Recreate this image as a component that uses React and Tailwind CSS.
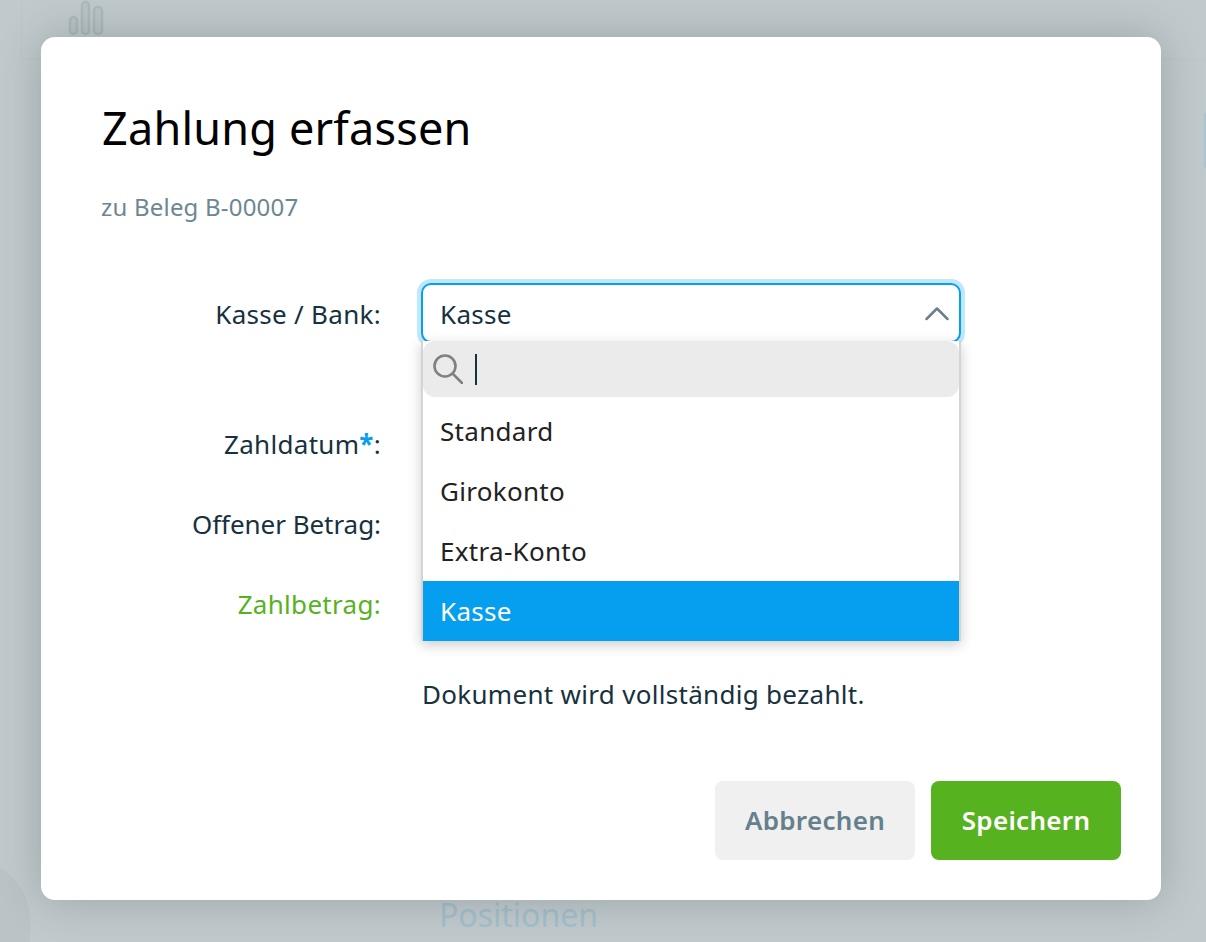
import { ChevronUp } from 'lucide-react';

const font = { fontFamily: '"Noto Sans", sans-serif' };

const options = ['Standard', 'Girokonto', 'Extra-Konto', 'Kasse'];

const FormRow = ({ label, height, className = '', children }) => (
  <div className={`flex items-center ${className}`} style={{ height }}>
    <div className="w-[279px] shrink-0 text-right">{label}</div>
    <div className="relative ml-[40px] w-[540px]">{children}</div>
  </div>
);

const KasseSelect = () => (
  <div className="relative h-[58px]">
    <div className="flex h-[60px] items-center justify-between rounded-[10px] border-2 border-[#069fef] bg-white pl-[17px] shadow-[0_0_0_4px_#c0e8fd]">
      <span className="pt-[2px]">Kasse</span>
      <svg className="mr-[10px] shrink-0" width="24" height="15" viewBox="0 0 24 15" fill="none" stroke="#6c8089" strokeWidth="2.5" strokeLinecap="round" strokeLinejoin="round">
        <path d="M1.5 13L12 2.5 22.5 13" />
      </svg>
    </div>
    <div className="absolute left-0 top-[58px] z-10 w-[540px] border-x-2 border-[#d4d4d4] bg-white shadow-[0_4px_12px_rgba(0,0,0,0.2)]">
      <div className="flex h-[56px] items-center rounded-[12px] bg-[#ebebeb] pl-[10px]">
        <svg width="30" height="30" viewBox="0 0 30 30" fill="none" stroke="#808080" strokeWidth="2.6" strokeLinecap="round">
          <circle cx="12" cy="12" r="10.5" />
          <path d="M20 20l9 9" />
        </svg>
        <span className="ml-[12px] h-[31px] w-[2px] bg-[#17313f]" />
      </div>
      <div className="pt-[4px]">
        {options.map((option) => (
          <div
            key={option}
            className={`flex h-[60px] items-center pl-[17px] ${option === 'Kasse' ? 'bg-[#069fef] text-white' : 'text-[#222222]'}`}
          >
            {option}
          </div>
        ))}
      </div>
    </div>
  </div>
);

export default function App() {
  return (
    <div style={font} className="relative h-[942px] w-[1206px] overflow-hidden bg-[#c0cacc] pl-[41px] pt-[37px] text-[26px] tracking-[0.3px] text-[#17313f]">
      {/* page behind the overlay */}
      <div className="absolute left-[21px] top-0 h-[60px] w-[1185px] border-b border-l border-[#bcc6c8]" />
      <svg className="absolute left-[68px] top-0" width="36" height="36" viewBox="0 0 36 36" fill="#b9c4c6" stroke="#adb9ba" strokeWidth="2.5">
        <rect x="2" y="17" width="7" height="17" rx="3.5" />
        <rect x="14" y="2" width="7" height="32" rx="3.5" />
        <rect x="26" y="7" width="8" height="27" rx="3.5" />
      </svg>
      <div className="absolute left-[-90px] top-[860px] h-[200px] w-[120px] rounded-full bg-[#bac4c6]" />
      <div className="absolute right-[-6px] top-[112px] h-[57px] w-[8px] rounded-[4px] bg-[#a9c4d0]" />
      <div className="absolute left-[439px] top-[893px] text-[32px] leading-[44px] tracking-normal text-[#a3c0cd]">Positionen</div>

      <div className="relative h-[863px] w-[1120px] rounded-[14px] bg-white pl-[61px] pr-[40px] shadow-[0_0_45px_rgba(0,0,0,0.2)]">
        <h1 className="pt-[56px] text-[45px] font-normal leading-[70px] tracking-[0.2px] text-black">Zahlung erfassen</h1>
        <p className="-ml-px mt-[29px] text-[24px] leading-[30px] tracking-[0.2px] text-[#6d8792]">zu Beleg B-00007</p>

        <div className="mt-[61px]">
          <FormRow label={<span className="relative top-[2px]">Kasse / Bank:</span>} height={58}>
            <KasseSelect />
          </FormRow>
          <FormRow
            height={60}
            className="mt-[73px]"
            label={<>Zahldatum<span className="font-bold text-[#069fef]">*</span>:</>}
          />
          <FormRow height={60} className="mt-[20px]" label={<span className="tracking-[-0.05px]">Offener Betrag:</span>} />
          <FormRow height={60} className="mt-[20px]" label={<span className="text-[#57b21f]">Zahlbetrag:</span>} />
          <FormRow height={40} className="mt-[40px]" label="">
            <span className="pl-[1px]">Dokument wird vollständig bezahlt.</span>
          </FormRow>
        </div>

        <div className="mt-[67px] flex justify-end gap-[16px]">
          <button type="button" className="h-[79px] w-[200px] rounded-[8px] bg-[#f0f0f0] font-semibold text-[#65808d]">Abbrechen</button>
          <button type="button" className="h-[79px] w-[190px] rounded-[8px] bg-[#57b21f] font-semibold text-white">Speichern</button>
        </div>
      </div>
    </div>
  );
}
